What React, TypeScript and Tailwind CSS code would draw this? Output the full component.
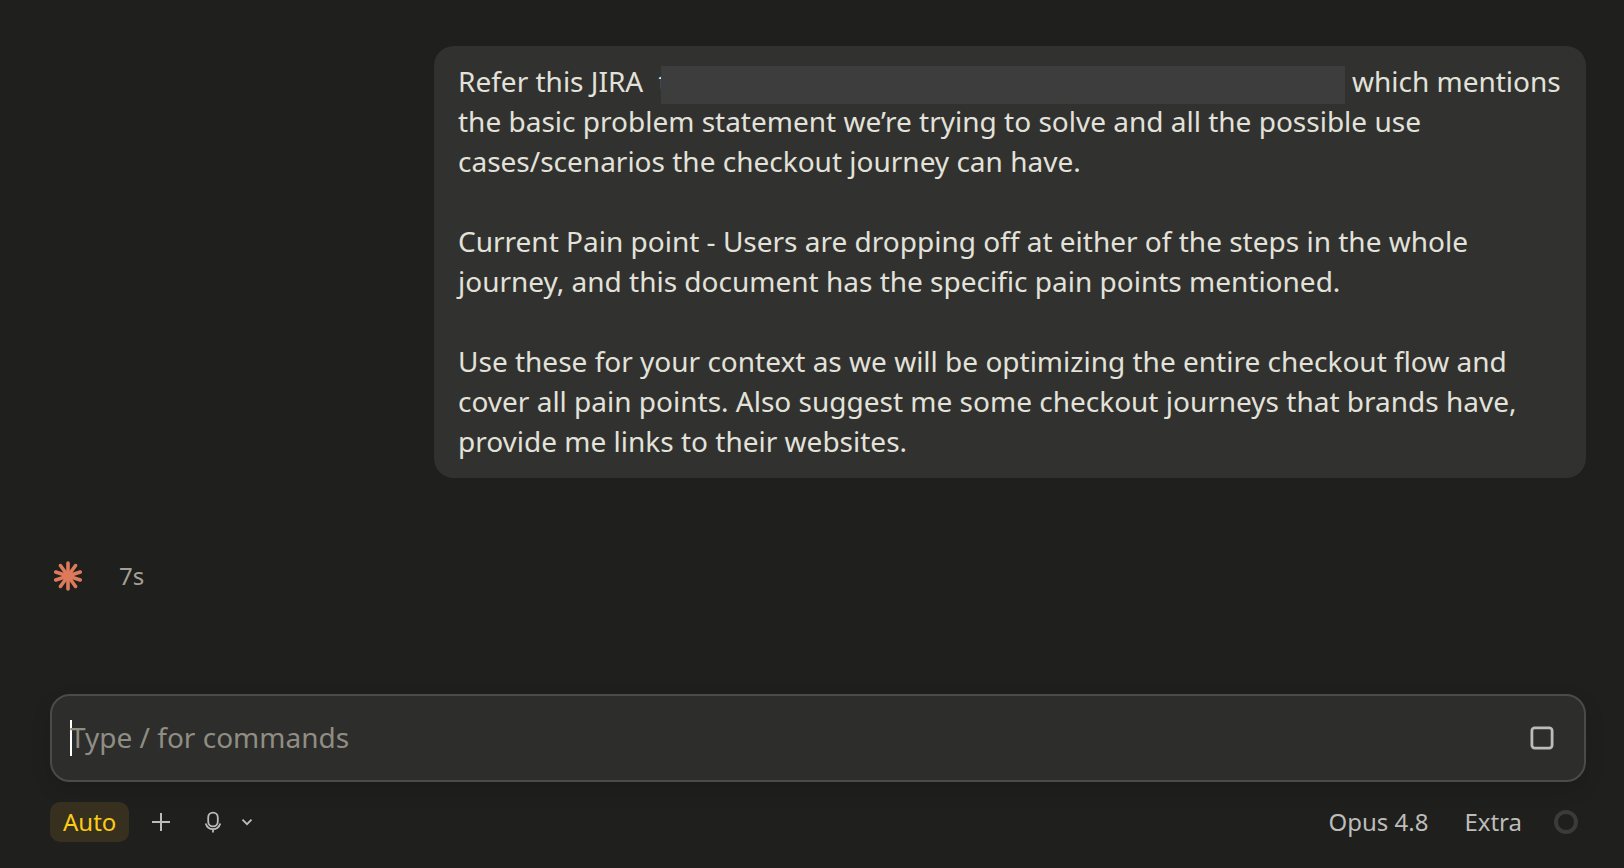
import type { JSX } from 'react';

const RAYS = [0, 36, 72, 108, 144, 180, 216, 252, 288, 324];

const Spark = (): JSX.Element => (
  <svg viewBox="0 0 30 30" className="size-[30px] text-[#dd7a5b]" stroke="currentColor" strokeWidth="3.6" strokeLinecap="round" aria-hidden="true">
    {RAYS.map((angle) => (
      <path key={angle} d="M15 15V2.1" transform={`rotate(${angle} 15 15)`} />
    ))}
  </svg>
);

const PlusIcon = (): JSX.Element => (
  <svg viewBox="0 0 20 20" className="size-5" fill="none" stroke="currentColor" strokeWidth="2" aria-hidden="true">
    <path d="M10 1v18M1 10h18" />
  </svg>
);

const MicIcon = (): JSX.Element => (
  <svg viewBox="0 0 20 22" className="w-5 h-[22px]" fill="none" stroke="currentColor" strokeWidth="1.8" aria-hidden="true">
    <rect x="5.2" y="1.6" width="9.6" height="13.8" rx="4.8" />
    <path d="M2.7 12.5C3.8 16 6.5 18.2 10 18.2s6.2-2.2 7.3-5.7M10 18.2v3.3" />
  </svg>
);

const ChevronIcon = (): JSX.Element => (
  <svg viewBox="0 0 12 8" className="w-3 h-2" fill="none" stroke="currentColor" strokeWidth="1.9" aria-hidden="true">
    <path d="M1.5 1.7 6 6.2l4.5-4.5" />
  </svg>
);

const UserMessage = (): JSX.Element => (
  <div className="ml-auto w-3/4 rounded-[20px] bg-[#31312f] pl-6 pr-[18px] pt-[15px] pb-[17px] text-[28px] leading-10 text-[#e3e2da]">
    <p className="mb-10">
      Refer this JIRA{' '}
      <span className="ml-2">t</span>
      <span className="relative -my-1 -ml-2 inline-block h-[38px] w-[684px] bg-[#3d3d3d] align-middle"></span>{' '}
      which mentions the basic problem statement we’re trying to solve and all the possible use cases/scenarios the checkout journey can have.
    </p>
    <p className="mb-10">
      Current Pain point - Users are dropping off at either of the steps in the whole journey, and this document has the specific pain points mentioned.
    </p>
    <p>
      Use these for your context as we will be optimizing the entire checkout flow and cover all pain points. Also suggest me some checkout journeys that brands have, provide me links to their websites.
    </p>
  </div>
);

const Composer = (): JSX.Element => (
  <div className="flex h-[88px] items-center rounded-[20px] border-2 border-[#4b4b49] bg-[#2d2d2b] pl-[18px] pr-7 shadow-[0_8px_20px_rgba(0,0,0,0.12)]">
    <span className="h-9 w-0.5 bg-white"></span>
    <input
      type="text"
      autoFocus
      aria-label="Message"
      placeholder="Type / for commands"
      className="-ml-0.5 min-w-0 flex-1 bg-transparent pb-0.5 text-[28px] leading-10 text-[#e3e2da] caret-transparent outline-none placeholder:text-[#908d84]"
    />
    <button type="button" aria-label="Stop" className="p-0.5 text-[#bcbcba]">
      <svg viewBox="0 0 24 24" className="size-6" fill="none" stroke="currentColor" strokeWidth="2.8" aria-hidden="true">
        <rect x="1.9" y="1.9" width="20.2" height="20.2" rx="2.8" />
      </svg>
    </button>
  </div>
);

const Toolbar = (): JSX.Element => (
  <div className="mt-5 flex items-center text-2xl leading-10 text-[#bdbcb8]">
    <button type="button" className="rounded-[10px] bg-[#37301f] px-[13px] text-[#fbcb15]">Auto</button>
    <button type="button" aria-label="Add" className="ml-[22px]"><PlusIcon /></button>
    <button type="button" aria-label="Dictate" className="ml-8"><MicIcon /></button>
    <button type="button" aria-label="Dictation options" className="ml-[18px]"><ChevronIcon /></button>
    <div className="ml-auto flex items-center pr-2">
      <button type="button">Opus 4.8</button>
      <button type="button" className="ml-9">Extra</button>
      <button type="button" aria-label="Context usage" className="ml-8 size-6 rounded-full border-4 border-[#3b3b39]"></button>
    </div>
  </div>
);

const App = (): JSX.Element => (
  <main className="flex min-h-screen flex-col bg-[#1f1f1d] pl-[50px] pr-[38px] pb-[26px] pt-[46px] font-['Noto_Sans',sans-serif]">
    <UserMessage />
    <div className="mt-[78px] flex items-center gap-9 pl-[3px] text-2xl leading-10 text-[#a3a197]">
      <Spark />
      <span>7s</span>
    </div>
    <div className="mt-auto">
      <Composer />
      <Toolbar />
    </div>
  </main>
);

export default App;
